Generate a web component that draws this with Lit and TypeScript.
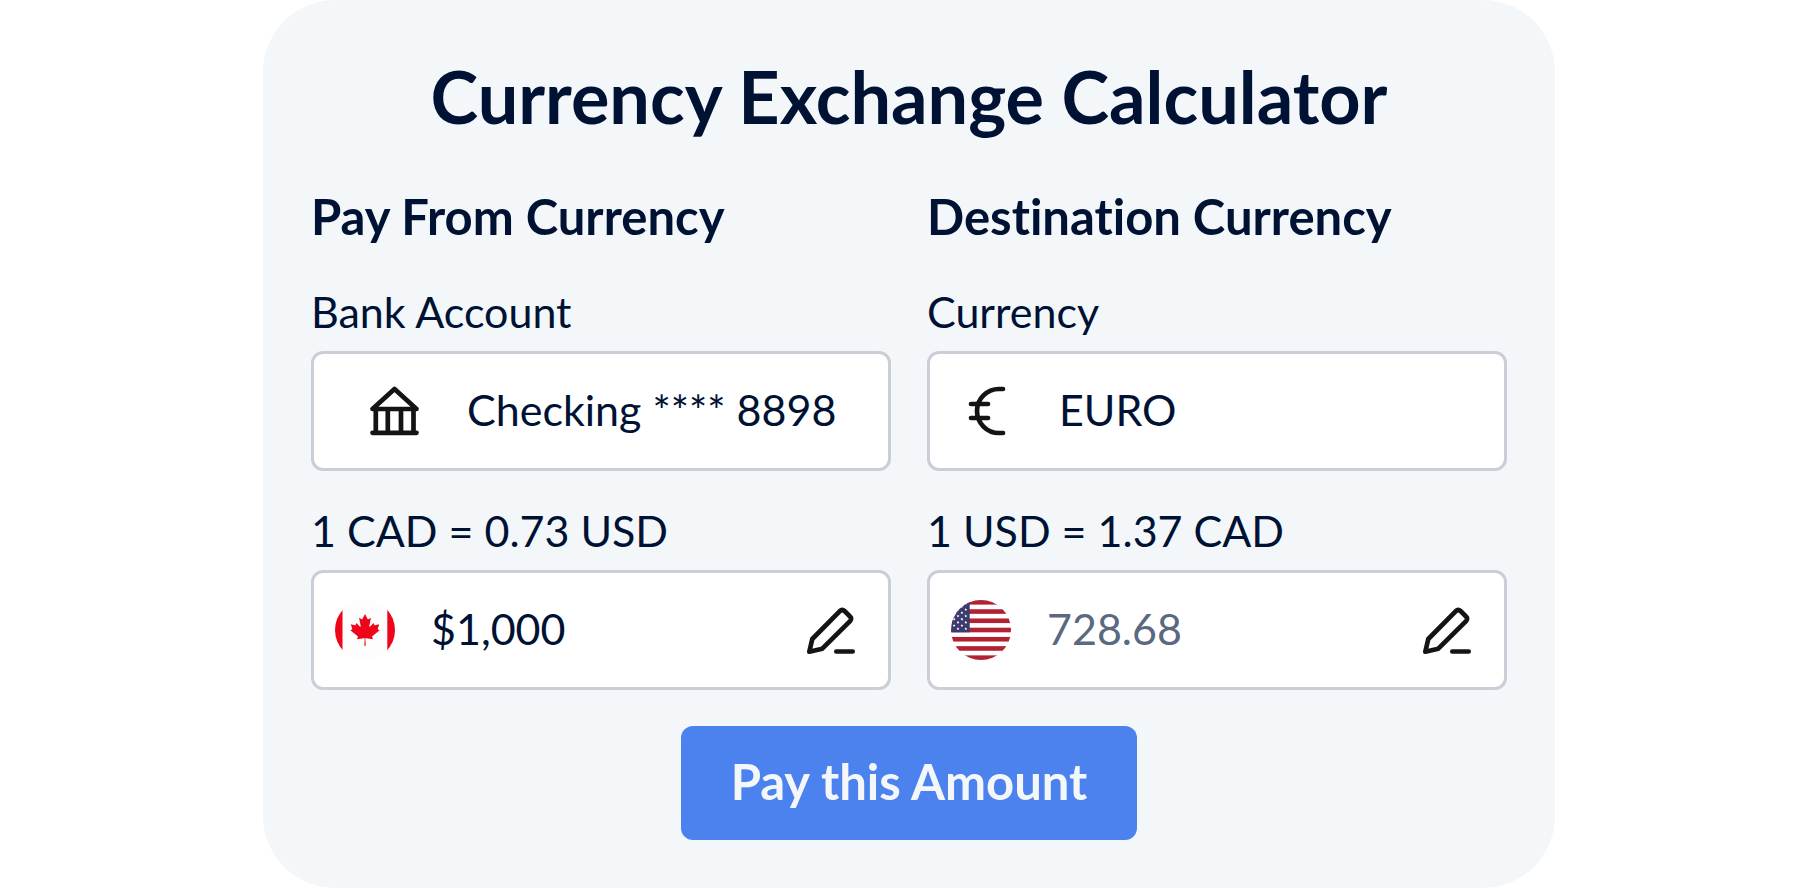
import { LitElement, html, css, svg } from "lit";
import { customElement, state } from "lit/decorators.js";

const bankIcon = html`<svg class="icon" viewBox="0 0 72 72" aria-hidden="true">
  <path d="M35.5 14 L13.5 34 H57.5 Z M16.8 34 V57.8 M28.8 34 V57.8 M42 34 V57.8 M54.5 34 V57.8 M13.5 57.8 H57.5" />
</svg>`;

const euroIcon = html`<svg class="icon" viewBox="0 0 72 72" aria-hidden="true">
  <path d="M52 14 H48 A22 22 0 0 0 48 58 H52 M20 29 H37 M20 43 H37" />
</svg>`;

const penIcon = html`<svg class="icon" viewBox="0 0 72 72" aria-hidden="true">
  <path d="M14.3 57.7 L17.3 45 L44.6 17.3 Q47.2 14.8 49.8 17.3 L54.8 22.2 Q57.4 24.8 54.8 27.4 L27.3 54.7 Z M41.3 57.5 H57.7" />
</svg>`;

const canadaFlag = html`<svg class="flag" viewBox="0 0 60 60" aria-hidden="true">
  <clipPath id="ca"><circle cx="30" cy="30" r="30" /></clipPath>
  <g clip-path="url(#ca)">
    <rect width="60" height="60" fill="#fdfdfd" />
    <rect width="7.5" height="60" fill="#ee0519" />
    <rect x="52.3" width="7.7" height="60" fill="#ee0519" />
    <path
      fill="#ee0519"
      transform="translate(30 29.7) scale(0.0079)"
      d="m-90 2030 45-863a95 95 0 0 0-111-98l-859 151 116-320a65 65 0 0 0-20-73l-941-762 212-99a65 65 0 0 0 34-79l-186-572 542 115a65 65 0 0 0 73-38l105-247 423 454a65 65 0 0 0 111-57l-204-1052 327 189a65 65 0 0 0 91-27l332-652 332 652a65 65 0 0 0 91 27l327-189-204 1052a65 65 0 0 0 111 57l423-454 105 247a65 65 0 0 0 73 38l542-115-186 572a65 65 0 0 0 34 79l212 99-941 762a65 65 0 0 0-20 73l116 320-859-151a95 95 0 0 0-111 98l45 863z"
    />
  </g>
</svg>`;

const starPoints = (cx: number, cy: number, r: number) =>
  Array.from({ length: 10 }, (_, i) => {
    const radius = i % 2 ? r * 0.5 : r;
    const a = (Math.PI / 5) * i - Math.PI / 2;
    return `${(cx + radius * Math.cos(a)).toFixed(2)},${(cy + radius * Math.sin(a)).toFixed(2)}`;
  }).join(" ");

const stars: string[] = [];
for (let row = 1; row <= 9; row++) {
  for (let col = 0; col < 5; col++) {
    if ((row + col) % 2) stars.push(starPoints(14.8 - col * 3.9, row * 3.2, 1.5));
  }
}

const usFlag = html`<svg class="flag" viewBox="0 0 60 60" aria-hidden="true">
  <clipPath id="us"><circle cx="30" cy="30" r="30" /></clipPath>
  <g clip-path="url(#us)">
    <rect width="60" height="60" fill="#fff" />
    ${[0, 1, 2, 3, 4, 5, 6].map(
      (i) => svg`<rect y=${(i * 120) / 13} width="60" height=${60 / 13} fill="#b22234" />`
    )}
    <rect width="18.7" height="32.3" fill="#3c3b6e" />
    ${stars.map((p) => svg`<polygon points=${p} fill="#fff" />`)}
  </g>
</svg>`;

@customElement("app-root")
export class AppRoot extends LitElement {
  @state() private payAmount = "$1,000";
  @state() private receiveAmount = "728.68";

  static styles = css`
    :host {
      display: block;
      font-family: Lato, "Open Sans", sans-serif;
      font-variant-ligatures: none;
      color: #001233;
    }
    * {
      box-sizing: border-box;
    }
    .card {
      display: flex;
      flex-direction: column;
      align-items: center;
      gap: 36px;
      max-width: 1292px;
      margin: 0 auto;
      padding: 48px;
      border-radius: 72px;
      background: #f3f7fa;
    }
    h1,
    h2 {
      margin: 0;
      font-weight: 700;
    }
    h1 {
      font-size: 72px;
      line-height: 96px;
      text-align: center;
    }
    h2 {
      font-size: 49px;
      line-height: 72px;
    }
    .columns {
      display: grid;
      grid-template-columns: 1fr 1fr;
      gap: 36px;
      width: 100%;
    }
    .column {
      display: flex;
      flex-direction: column;
      gap: 36px;
      min-width: 0;
    }
    .label {
      display: block;
      padding-bottom: 15px;
      font-size: 43px;
      line-height: 48px;
      font-weight: 400;
    }
    .box {
      display: flex;
      align-items: center;
      gap: 36px;
      height: 120px;
      padding: 0 21px;
      border: 3px solid #cbced7;
      border-radius: 12px;
      background: #fff;
    }
    .box.inset {
      padding: 0 45px;
    }
    .input {
      flex: 1;
      min-width: 0;
      padding: 0 0 4px;
      border: 0;
      outline: 0;
      background: none;
      font: inherit;
      font-size: 43px;
      line-height: 63px;
      color: inherit;
    }
    .input.muted {
      color: #5a6880;
    }
    .icon {
      display: block;
      flex: none;
      width: 72px;
      height: 72px;
      fill: none;
      stroke: #141414;
      stroke-width: 4.7;
      stroke-linecap: round;
      stroke-linejoin: round;
    }
    .flag {
      display: block;
      flex: none;
      width: 60px;
      height: 60px;
    }
    .edit {
      flex: none;
      padding: 0;
      border: 0;
      background: none;
      cursor: pointer;
    }
    .pay {
      padding: 19px 50px 23px;
      border: 0;
      border-radius: 12px;
      background: #4c82ee;
      color: #f3f7fa;
      font: inherit;
      font-size: 49px;
      line-height: 72px;
      font-weight: 700;
      cursor: pointer;
    }
    @media (max-width: 1000px) {
      .columns {
        grid-template-columns: 1fr;
      }
    }
  `;

  private edit(id: string) {
    this.renderRoot.querySelector<HTMLInputElement>(`#${id}`)?.focus();
  }

  render() {
    return html`
      <main class="card">
        <h1>Currency Exchange Calculator</h1>
        <div class="columns">
          <section class="column">
            <h2>Pay From Currency</h2>
            <div>
              <label class="label" for="account">Bank Account</label>
              <div class="box inset">
                ${bankIcon}
                <input class="input" id="account" type="text" value="Checking **** 8898" />
              </div>
            </div>
            <div>
              <label class="label" for="pay">1 CAD = 0.73 USD</label>
              <div class="box">
                ${canadaFlag}
                <input
                  class="input"
                  id="pay"
                  type="text"
                  .value=${this.payAmount}
                  @input=${(e: Event) => (this.payAmount = (e.target as HTMLInputElement).value)}
                />
                <button class="edit" aria-label="Edit amount to pay" @click=${() => this.edit("pay")}>
                  ${penIcon}
                </button>
              </div>
            </div>
          </section>
          <section class="column">
            <h2>Destination Currency</h2>
            <div>
              <label class="label" for="currency">Currency</label>
              <div class="box">
                ${euroIcon}
                <input class="input" id="currency" type="text" value="EURO" />
              </div>
            </div>
            <div>
              <label class="label" for="receive">1 USD = 1.37 CAD</label>
              <div class="box">
                ${usFlag}
                <input
                  class="input muted"
                  id="receive"
                  type="text"
                  .value=${this.receiveAmount}
                  @input=${(e: Event) => (this.receiveAmount = (e.target as HTMLInputElement).value)}
                />
                <button class="edit" aria-label="Edit amount received" @click=${() => this.edit("receive")}>
                  ${penIcon}
                </button>
              </div>
            </div>
          </section>
        </div>
        <button class="pay">Pay this Amount</button>
      </main>
    `;
  }
}
